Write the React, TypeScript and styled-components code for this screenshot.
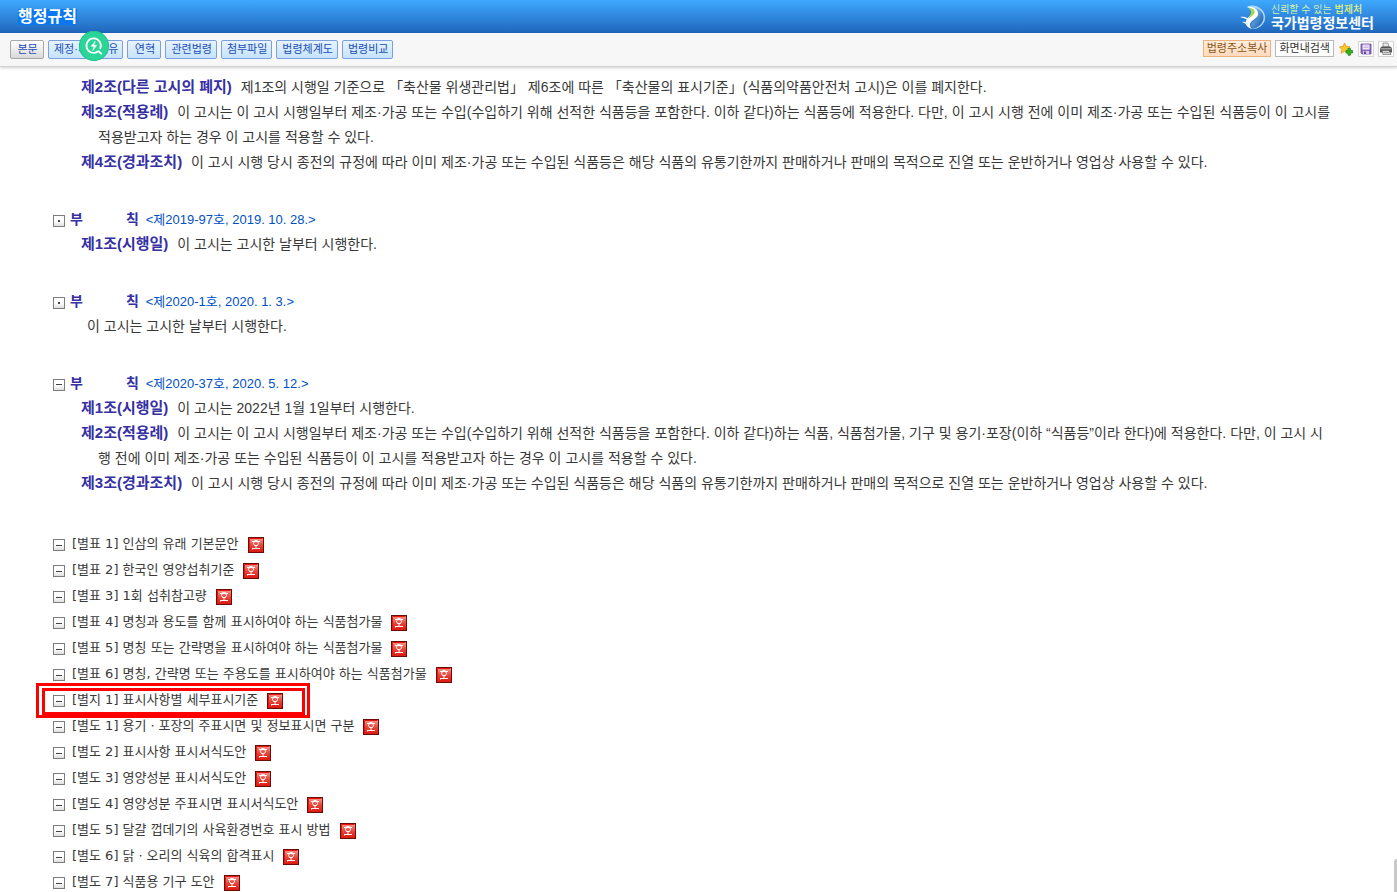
import React from "react";
import styled, { createGlobalStyle, css } from "styled-components";

const GlobalStyle = createGlobalStyle`
  * { box-sizing: border-box; }
  body {
    margin: 0;
    background: #fff;
    color: #383838;
    font-family: "Liberation Sans", "Noto Sans CJK KR", sans-serif;
    font-size: 14px;
  }
  button { font-family: inherit; }
`;

const Page = styled.div`
  display: flex;
  flex-direction: column;
  height: 100vh;
  position: relative;
`;

const Header = styled.header`
  flex: none;
  display: flex;
  align-items: center;
  justify-content: space-between;
  height: 33px;
  padding: 0 23px 0 18px;
  background: linear-gradient(#3fa9ff, #1f66bb);
`;

const Title = styled.h1`
  margin: 0;
  font-size: 16px;
  line-height: 16px;
  color: #fff;
  background: #0a78f2;
`;

const Brand = styled.a`
  display: flex;
  align-items: center;
  gap: 5px;
  text-decoration: none;
`;

const BrandText = styled.span`
  display: flex;
  flex-direction: column;
`;

const Slogan = styled.span`
  font-size: 10px;
  line-height: 12px;
  color: #cfeeb4;
  b {
    font-weight: 500;
    color: #e2f27c;
  }
`;

const SiteName = styled.strong`
  font-size: 14px;
  line-height: 14px;
  color: #fff;
`;

const Toolbar = styled.nav`
  flex: none;
  display: flex;
  align-items: center;
  justify-content: space-between;
  height: 34px;
  padding: 0 3px 0 10px;
  background: #f7f7f7;
  border-bottom: 1px solid #d2d2d2;
  box-shadow: 0 1px 3px rgba(0, 0, 0, 0.18);
  position: relative;
`;

const Group = styled.div`
  display: flex;
  align-items: center;
  gap: 4px;
`;

const TabButton = styled.button<{ $current?: boolean }>`
  height: 19px;
  min-width: 34px;
  padding: 0 4px 1px 5px;
  border: 1px solid #7b9fe0;
  border-radius: 2px;
  background: linear-gradient(#e6f4ff, #c6e3fb);
  color: #1a4cb8;
  font-size: 11px;
  line-height: 16px;
  white-space: nowrap;
  ${(p) =>
    p.$current &&
    css`
      border-color: #a8a8a8;
      background: linear-gradient(#fff, #d9d9d9);
    `}
`;

const ToolButton = styled.button<{ $accent?: boolean }>`
  height: 17px;
  padding: 0 3px 1px;
  border: 1px solid ${(p) => (p.$accent ? "#ecb27c" : "#b9b9b9")};
  background: ${(p) => (p.$accent ? "linear-gradient(#ffeddd, #ffd9bf)" : "#fff")};
  color: ${(p) => (p.$accent ? "#8a5410" : "#333")};
  font-size: 11px;
  line-height: 14px;
  white-space: nowrap;
`;

const IconButton = styled.button<{ $framed?: boolean }>`
  display: flex;
  align-items: center;
  justify-content: center;
  width: 16px;
  height: 16px;
  padding: 0;
  border: 1px solid ${(p) => (p.$framed ? "#d6d6d6" : "transparent")};
  background: ${(p) => (p.$framed ? "#fff" : "transparent")};
`;

const ToolGroup = styled(Group)`
  padding-bottom: 2px;
`;

const FloatingSearch = styled.button`
  position: absolute;
  left: 79px;
  top: 31px;
  z-index: 2;
  width: 30px;
  height: 30px;
  padding: 0;
  border: 0;
  border-radius: 50%;
  background: #2bd598;
  box-shadow: inset 0 0 0 1px #22c48a;
`;

const Content = styled.main`
  flex: 1;
  min-height: 0;
  overflow-y: auto;
  scrollbar-width: none;
  padding: 8px 64px 0 53px;
`;

const Section = styled.section`
  margin-bottom: 32px;
`;

const SectionHead = styled.div`
  display: flex;
  align-items: center;
  gap: 5px;
  height: 25px;
`;

const SectionTitle = styled.h2`
  display: flex;
  gap: 43px;
  margin: 0 2px 0 0;
  font-size: 14px;
  line-height: 25px;
  color: #3530a4;
`;

const Notice = styled.span`
  font-size: 13px;
  line-height: 25px;
  color: #0050c8;
`;

const Article = styled.p`
  margin: 0;
  padding-left: 45px;
  text-indent: -17px;
  line-height: 25px;
  word-break: break-all;
  b {
    margin-right: 5px;
    font-size: 15px;
    line-height: 15px;
    color: #3530a4;
  }
`;

const PlainText = styled.p`
  margin: 0;
  padding-left: 34px;
  line-height: 25px;
`;

const Toggle = styled.button<{ $open?: boolean }>`
  flex: none;
  display: flex;
  align-items: center;
  justify-content: center;
  width: 12px;
  height: 12px;
  margin-top: 2px;
  padding: 0;
  border: 1px solid #7d7d7d;
  background: linear-gradient(#fff 50%, #dedede);
  &::before {
    content: "";
    width: ${(p) => (p.$open ? 6 : 2)}px;
    height: ${(p) => (p.$open ? 1 : 2)}px;
    background: #444;
  }
`;

const Attachments = styled.ul`
  margin: 35px 0 0;
  padding: 0;
  list-style: none;
`;

const AttachmentRow = styled.li`
  position: relative;
  display: flex;
  align-items: center;
  gap: 7px;
  height: 26px;
  white-space: nowrap;
`;

const AttachmentLink = styled.a`
  font-family: "DejaVu Sans", "Noto Sans CJK KR", sans-serif;
  font-size: 13px;
  line-height: 26px;
  color: #383838;
  text-decoration: none;
`;

const FileButton = styled.button`
  width: 16px;
  height: 16px;
  margin: 2px 0 0 2px;
  padding: 0;
  border: 0;
  background: none;
  svg {
    display: block;
  }
`;

const Highlight = styled.span`
  position: absolute;
  left: -17px;
  top: -4px;
  width: 274px;
  height: 35px;
  border: 3px solid #f00;
  pointer-events: none;
  &::after {
    content: "";
    position: absolute;
    inset: 2px 2px 0 3px;
    border: 3px solid #f00;
  }
`;

const ScrollThumb = styled.span`
  position: absolute;
  right: 0;
  bottom: 0;
  width: 3px;
  height: 33px;
  border-radius: 3px 0 0 0;
  background: #c9c9c9;
`;

const LogoMark = () => (
  <svg width="26" height="26" viewBox="0 0 26 26" aria-hidden="true">
    <defs>
      <linearGradient id="globe" x1="0" y1="0" x2="1" y2="1">
        <stop offset="0" stopColor="#8ed0fa" />
        <stop offset="1" stopColor="#0d4fa6" />
      </linearGradient>
    </defs>
    <path d="M7 3C14-1 24 4 25 12C26 19 20 25.500 12 25C18 22 21 17 20 11C19 6 13 3 7 3Z" fill="#a9d8fa" />
    <path d="M13 4C20 4 24 9 23.500 14C23 20 18 24 13 24.500C10 22 11 19 14 17C19 14 20 8 13 4Z" fill="url(#globe)" />
    <path d="M7 3C14 2 19 6 18 11C17 15 11 16 10 20C9.500 22 11 24 12 25C6 23 4 19 7 15C9 12 13 11 12 8C11 5 9 4 7 3Z" fill="#fff" />
    <path d="M8 3.500C13 4 15.500 6 14.500 9C13.500 12 10 12.500 8 15C9 12 12 10 11 7C10.500 5 9.500 4.500 8 3.500Z" fill="#a9d84c" />
    <path d="M0 13C4 12 7 13 9 16C6 15 4 14 0 13Z" fill="#fff" />
    <path d="M2 18C5 17 7 18 8 21C6 20 4 19 2 18Z" fill="#d5edff" />
  </svg>
);

const SearchBolt = () => (
  <svg width="30" height="30" viewBox="0 0 30 30" fill="none" stroke="#fff" strokeLinecap="round" strokeLinejoin="round" aria-hidden="true">
    <path d="M18.800 20.500A7.200 7.200 0 1 1 21.300 17.300" strokeWidth="1.700" />
    <path d="M19.500 20.200L22.200 22.600" strokeWidth="1.900" />
    <path d="M16 10.500L12.200 15.300H15L13.800 19.500L17.700 14.300H15Z" fill="#fff" strokeWidth="0.600" />
  </svg>
);

const StarAdd = () => (
  <svg width="14" height="14" viewBox="0 0 14 14" aria-hidden="true">
    <path d="M5.500 1L7 4.500L11 4.800L8 7.500L9 11.200L5.500 9.300L2 11.300L2.900 7.500L0.500 4.900L4.100 4.500Z" fill="#ffc928" stroke="#e09510" strokeWidth="0.800" />
    <path d="M9 6.500H11.500V8.500H13.500V11H11.500V13.200H9V11H7V8.500H9Z" fill="#35b51e" stroke="#167d10" strokeWidth="0.700" />
  </svg>
);

const Disk = () => (
  <svg width="12" height="12" viewBox="0 0 12 12" aria-hidden="true">
    <path d="M1 1H11V11H2L1 10Z" fill="#8a68bb" stroke="#6a489c" strokeWidth="0.800" />
    <rect x="2.500" y="1.500" width="7" height="5" fill="#f1eaf8" />
    <path d="M3.500 3H8.500M3.500 4.500H8.500" stroke="#b39bd3" strokeWidth="0.600" />
    <rect x="3" y="8" width="6" height="3" fill="#d8cae8" />
    <rect x="4" y="8.500" width="2" height="2.500" fill="#6a489c" />
  </svg>
);

const Printer = () => (
  <svg width="14" height="14" viewBox="0 0 14 14" aria-hidden="true">
    <path d="M4 1H9L10 5H4Z" fill="#e7e9ec" stroke="#777" strokeWidth="0.700" />
    <path d="M1 6L3 4.500H11L13 6V10.500H1Z" fill="#555" />
    <path d="M1.500 6H12.500V7.500H1.500Z" fill="#a0a0a0" />
    <path d="M3 8.500H10L12 12.500H4Z" fill="#dcdcdc" stroke="#555" strokeWidth="0.600" />
    <path d="M4.500 10.500H10" stroke="#888" strokeWidth="0.800" />
  </svg>
);

const FileIcon = () => (
  <svg width="16" height="16" viewBox="0 0 16 16" aria-hidden="true">
    <defs>
      <linearGradient id="file" x1="0" y1="0" x2="0" y2="1">
        <stop offset="0" stopColor="#f7a096" />
        <stop offset="0.500" stopColor="#e6483d" />
        <stop offset="1" stopColor="#dc150c" />
      </linearGradient>
    </defs>
    <rect x="0.500" y="0.500" width="15" height="15" fill="url(#file)" stroke="#6b0d06" />
    <path d="M1.500 14.500V1.500H14.500" fill="none" stroke="#e8160c" />
    <g fill="none" stroke="#fff">
      <path d="M6.500 3.500H9.500M4 4.500H12" />
      <path d="M6 5L5.500 6.500L6.500 8.500H9.500L10.500 6.500L10 5" />
      <path d="M8 9V11.500M4 11.500H12M4.500 11V12.500" />
    </g>
  </svg>
);

const tabs = ["본문", "제정·개정이유", "연혁", "관련법령", "첨부파일", "법령체계도", "법령비교"];

const attachments = [
  "[별표 1] 인삼의 유래 기본문안",
  "[별표 2] 한국인 영양섭취기준",
  "[별표 3] 1회 섭취참고량",
  "[별표 4] 명칭과 용도를 함께 표시하여야 하는 식품첨가물",
  "[별표 5] 명칭 또는 간략명을 표시하여야 하는 식품첨가물",
  "[별표 6] 명칭, 간략명 또는 주용도를 표시하여야 하는 식품첨가물",
  "[별지 1] 표시사항별 세부표시기준",
  "[별도 1] 용기ㆍ포장의 주표시면 및 정보표시면 구분",
  "[별도 2] 표시사항 표시서식도안",
  "[별도 3] 영양성분 표시서식도안",
  "[별도 4] 영양성분 주표시면 표시서식도안",
  "[별도 5] 달걀 껍데기의 사육환경번호 표시 방법",
  "[별도 6] 닭ㆍ오리의 식육의 합격표시",
  "[별도 7] 식품용 기구 도안",
];

const highlighted = 6;

function Heading({ notice, open }: { notice: string; open?: boolean }) {
  return (
    <SectionHead>
      <Toggle $open={open} aria-label={notice} aria-expanded={!!open} />
      <SectionTitle>
        <span>부</span>
        <span>칙</span>
      </SectionTitle>
      <Notice>{notice}</Notice>
    </SectionHead>
  );
}

export default function App() {
  return (
    <Page>
      <GlobalStyle />
      <Header>
        <Title>행정규칙</Title>
        <Brand href="#">
          <LogoMark />
          <BrandText>
            <Slogan>
              신뢰할 수 있는 <b>법제처</b>
            </Slogan>
            <SiteName>국가법령정보센터</SiteName>
          </BrandText>
        </Brand>
      </Header>
      <Toolbar>
        <Group>
          {tabs.map((t, i) => (
            <TabButton key={t} $current={i === 0}>
              {t}
            </TabButton>
          ))}
        </Group>
        <ToolGroup>
          <ToolButton $accent>법령주소복사</ToolButton>
          <ToolButton>화면내검색</ToolButton>
          <IconButton aria-label="즐겨찾기 추가">
            <StarAdd />
          </IconButton>
          <IconButton $framed aria-label="저장">
            <Disk />
          </IconButton>
          <IconButton $framed aria-label="인쇄">
            <Printer />
          </IconButton>
        </ToolGroup>
      </Toolbar>
      <FloatingSearch aria-label="검색">
        <SearchBolt />
      </FloatingSearch>
      <Content>
        <Section>
          <Article>
            <b>제2조(다른 고시의 폐지)</b> 제1조의 시행일 기준으로 「축산물 위생관리법」 제6조에 따른 「축산물의 표시기준」(식품의약품안전처 고시)은 이를 폐지한다.
          </Article>
          <Article>
            <b>제3조(적용례)</b> 이 고시는 이 고시 시행일부터 제조·가공 또는 수입(수입하기 위해 선적한 식품등을 포함한다. 이하 같다)하는 식품등에 적용한다. 다만, 이 고시 시행 전에 이미 제조·가공 또는 수입된 식품등이 이 고시를 적용받고자 하는 경우 이 고시를 적용할 수 있다.
          </Article>
          <Article>
            <b>제4조(경과조치)</b> 이 고시 시행 당시 종전의 규정에 따라 이미 제조·가공 또는 수입된 식품등은 해당 식품의 유통기한까지 판매하거나 판매의 목적으로 진열 또는 운반하거나 영업상 사용할 수 있다.
          </Article>
        </Section>
        <Section>
          <Heading notice="<제2019-97호, 2019. 10. 28.>" />
          <Article>
            <b>제1조(시행일)</b> 이 고시는 고시한 날부터 시행한다.
          </Article>
        </Section>
        <Section>
          <Heading notice="<제2020-1호, 2020. 1. 3.>" />
          <PlainText>이 고시는 고시한 날부터 시행한다.</PlainText>
        </Section>
        <Section>
          <Heading notice="<제2020-37호, 2020. 5. 12.>" open />
          <Article>
            <b>제1조(시행일)</b> 이 고시는 2022년 1월 1일부터 시행한다.
          </Article>
          <Article>
            <b>제2조(적용례)</b> 이 고시는 이 고시 시행일부터 제조·가공 또는 수입(수입하기 위해 선적한 식품등을 포함한다. 이하 같다)하는 식품, 식품첨가물, 기구 및 용기·포장(이하 “식품등”이라 한다)에 적용한다. 다만, 이 고시 시행 전에 이미 제조·가공 또는 수입된 식품등이 이 고시를 적용받고자 하는 경우 이 고시를 적용할 수 있다.
          </Article>
          <Article>
            <b>제3조(경과조치)</b> 이 고시 시행 당시 종전의 규정에 따라 이미 제조·가공 또는 수입된 식품등은 해당 식품의 유통기한까지 판매하거나 판매의 목적으로 진열 또는 운반하거나 영업상 사용할 수 있다.
          </Article>
        </Section>
        <Attachments>
          {attachments.map((name, i) => (
            <AttachmentRow key={name}>
              <Toggle $open aria-label={name} />
              <AttachmentLink href="#">{name}</AttachmentLink>
              <FileButton aria-label={`${name} 파일`}>
                <FileIcon />
              </FileButton>
              {i === highlighted && <Highlight />}
            </AttachmentRow>
          ))}
        </Attachments>
      </Content>
      <ScrollThumb />
    </Page>
  );
}
